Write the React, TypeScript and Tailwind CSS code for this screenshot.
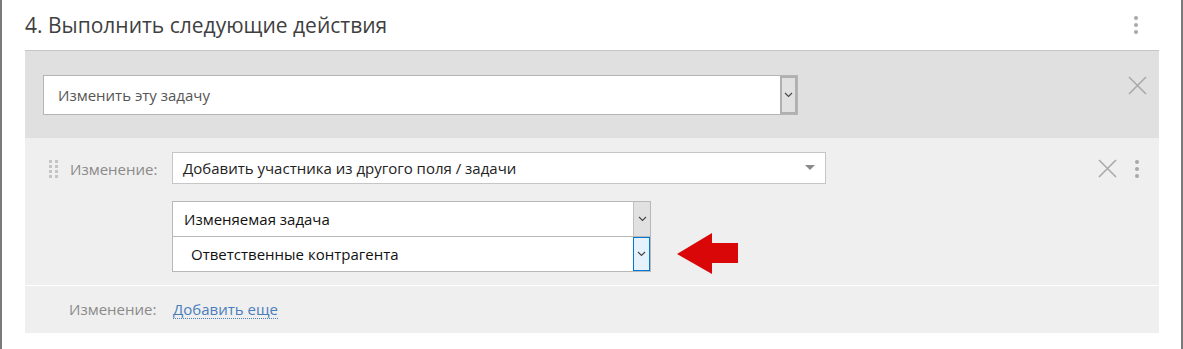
function Kebab({ className = "" }: { className?: string }) {
  return (
    <div className={`flex flex-col items-center gap-[3px] ${className}`}>
      <span className="h-[4px] w-[4px] rounded-full bg-[#a8a8a8]" />
      <span className="h-[4px] w-[4px] rounded-full bg-[#a8a8a8]" />
      <span className="h-[4px] w-[4px] rounded-full bg-[#a8a8a8]" />
    </div>
  );
}

function Cross({ size = 19 }: { size?: number }) {
  return (
    <svg width={size} height={size} viewBox="0 0 19 19" fill="none">
      <path d="M1 1L18 18M18 1L1 18" stroke="#a9a9a9" strokeWidth="1.6" />
    </svg>
  );
}

function Chevron() {
  return (
    <svg width="9" height="6" viewBox="0 0 9 6" fill="none">
      <path d="M1 1L4.5 4.5L8 1" stroke="#444" strokeWidth="1.1" />
    </svg>
  );
}

function DragHandle() {
  return (
    <div className="grid grid-cols-2 gap-x-[3px] gap-y-[2px]">
      {Array.from({ length: 8 }).map((_, i) => (
        <span key={i} className="h-[3px] w-[3px] bg-[#c4c4c4]" />
      ))}
    </div>
  );
}

export default function App() {
  return (
    <div
      className="h-[349px] w-[1183px] overflow-hidden bg-white"
      style={{ fontFamily: '"Open Sans", "Noto Sans", sans-serif' }}
    >
      <div className="flex h-full border-x-2 border-x-[#7a7a7a]">
        <div className="flex w-full flex-col pl-[23px] pr-[22px]">
          {/* header */}
          <div className="flex h-[50px] items-center justify-between">
            <h2 className="text-[21px] leading-none text-[#3f3f3f]">4. Выполнить следующие действия</h2>
            <Kebab className="mr-[21px]" />
          </div>

          {/* action type panel */}
          <div className="flex h-[88px] items-start justify-between border-t border-[#c6c6c6] bg-[#e0e0e0] pl-[18px] pr-[12px] pt-[24px]">
            <div className="flex h-[40px] w-[755px] border border-[#b5b5b5] bg-white">
              <div className="flex flex-1 items-center pl-[14px] text-[15px] text-[#555]">Изменить эту задачу</div>
              <div className="flex w-[17px] items-center justify-center border-2 border-[#b0b0b0] bg-[#e1e1e1]">
                <Chevron />
              </div>
            </div>
            <div className="pt-[1px]">
              <Cross />
            </div>
          </div>

          {/* change row */}
          <div className="flex flex-col bg-[#efefef]">
            <div className="flex h-[148px] items-start border-b border-white pt-[14px]">
              <div className="ml-[24px] mt-[8px]">
                <DragHandle />
              </div>
              <div className="ml-[12px] mt-[6px] w-[102px] text-[15px] text-[#8a8a8a]">Изменение:</div>
              <div className="flex flex-col">
                <div className="relative flex h-[32px] w-[654px] items-center border border-[#c6c6c6] bg-white pl-[10px] text-[15px] text-[#222]">
                  Добавить участника из другого поля / задачи
                  <span className="absolute right-[10px] top-[12px] h-0 w-0 border-x-[5px] border-t-[5px] border-x-transparent border-t-[#8a8a8a]" />
                </div>
                <div className="mt-[17px] flex items-start">
                  <div className="flex w-[479px] flex-col">
                    <div className="flex h-[36px] border border-[#b8b8b8] bg-white">
                      <div className="flex flex-1 items-center pl-[11px] text-[15px] text-[#111]">Изменяемая задача</div>
                      <div className="flex w-[17px] items-center justify-center border-l border-[#c0c0c0] bg-[#e1e1e1]">
                        <Chevron />
                      </div>
                    </div>
                    <div className="flex h-[35px] border border-t-0 border-[#b8b8b8] bg-white">
                      <div className="flex flex-1 items-center pl-[18px] text-[15px] text-[#111]">Ответственные контрагента</div>
                      <div className="flex w-[17px] items-center justify-center border border-[#0078d7] bg-[#e5f1fb]">
                        <Chevron />
                      </div>
                    </div>
                  </div>
                  <svg className="ml-[25px] mt-[31px]" width="63" height="43" viewBox="0 0 63 43">
                    <path d="M1 22L36 1V11H62V31H36V42Z" fill="#d90707" />
                  </svg>
                </div>
              </div>
              <div className="ml-auto mr-[20px] flex items-center gap-[18px] pt-[7px]">
                <Cross size={19} />
                <Kebab />
              </div>
            </div>
            <div className="flex h-[47px] items-center">
              <div className="ml-[44px] w-[104px] text-[15px] text-[#8a8a8a]">Изменение:</div>
              <a className="border-b border-dotted border-[#4a7ebb] text-[15px] leading-[18px] text-[#4a7ebb]">Добавить еще</a>
            </div>
          </div>
        </div>
      </div>
    </div>
  );
}
